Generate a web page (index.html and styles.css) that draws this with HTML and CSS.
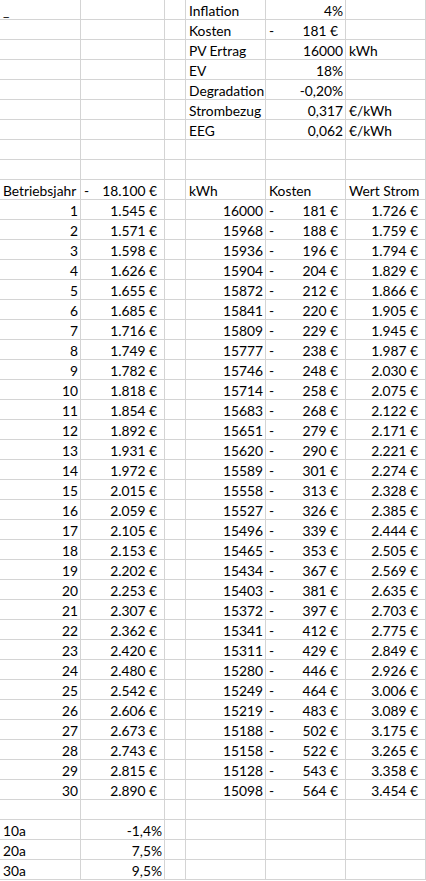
FILE: index.html
```html
<!DOCTYPE html>
<html lang="de">
<head>
<meta charset="utf-8">
<title>PV Berechnung</title>
<link rel="stylesheet" href="styles.css">
</head>
<body>
<div class="sheet">
<div class="c">_</div><div class="c"></div><div class="c"></div><div class="c">Inflation</div><div class="c r">4%</div><div class="c"></div>
<div class="c"></div><div class="c"></div><div class="c"></div><div class="c">Kosten</div><div class="c acc"><span>-</span><span>181 €</span></div><div class="c"></div>
<div class="c"></div><div class="c"></div><div class="c"></div><div class="c">PV Ertrag</div><div class="c r">16000</div><div class="c">kWh</div>
<div class="c"></div><div class="c"></div><div class="c"></div><div class="c">EV</div><div class="c r">18%</div><div class="c"></div>
<div class="c"></div><div class="c"></div><div class="c"></div><div class="c">Degradation</div><div class="c r">-0,20%</div><div class="c"></div>
<div class="c"></div><div class="c"></div><div class="c"></div><div class="c">Strombezug</div><div class="c r">0,317</div><div class="c">€/kWh</div>
<div class="c"></div><div class="c"></div><div class="c"></div><div class="c">EEG</div><div class="c r">0,062</div><div class="c">€/kWh</div>
<div class="c"></div><div class="c"></div><div class="c"></div><div class="c"></div><div class="c"></div><div class="c"></div>
<div class="c"></div><div class="c"></div><div class="c"></div><div class="c"></div><div class="c"></div><div class="c"></div>
<div class="c">Betriebsjahr</div><div class="c acc"><span>-</span><span>18.100 €</span></div><div class="c"></div><div class="c">kWh</div><div class="c">Kosten</div><div class="c">Wert Strom</div>
<div class="c r">1</div><div class="c acc"><span>1.545 €</span></div><div class="c"></div><div class="c r">16000</div><div class="c acc"><span>-</span><span>181 €</span></div><div class="c acc"><span>1.726 €</span></div>
<div class="c r">2</div><div class="c acc"><span>1.571 €</span></div><div class="c"></div><div class="c r">15968</div><div class="c acc"><span>-</span><span>188 €</span></div><div class="c acc"><span>1.759 €</span></div>
<div class="c r">3</div><div class="c acc"><span>1.598 €</span></div><div class="c"></div><div class="c r">15936</div><div class="c acc"><span>-</span><span>196 €</span></div><div class="c acc"><span>1.794 €</span></div>
<div class="c r">4</div><div class="c acc"><span>1.626 €</span></div><div class="c"></div><div class="c r">15904</div><div class="c acc"><span>-</span><span>204 €</span></div><div class="c acc"><span>1.829 €</span></div>
<div class="c r">5</div><div class="c acc"><span>1.655 €</span></div><div class="c"></div><div class="c r">15872</div><div class="c acc"><span>-</span><span>212 €</span></div><div class="c acc"><span>1.866 €</span></div>
<div class="c r">6</div><div class="c acc"><span>1.685 €</span></div><div class="c"></div><div class="c r">15841</div><div class="c acc"><span>-</span><span>220 €</span></div><div class="c acc"><span>1.905 €</span></div>
<div class="c r">7</div><div class="c acc"><span>1.716 €</span></div><div class="c"></div><div class="c r">15809</div><div class="c acc"><span>-</span><span>229 €</span></div><div class="c acc"><span>1.945 €</span></div>
<div class="c r">8</div><div class="c acc"><span>1.749 €</span></div><div class="c"></div><div class="c r">15777</div><div class="c acc"><span>-</span><span>238 €</span></div><div class="c acc"><span>1.987 €</span></div>
<div class="c r">9</div><div class="c acc"><span>1.782 €</span></div><div class="c"></div><div class="c r">15746</div><div class="c acc"><span>-</span><span>248 €</span></div><div class="c acc"><span>2.030 €</span></div>
<div class="c r">10</div><div class="c acc"><span>1.818 €</span></div><div class="c"></div><div class="c r">15714</div><div class="c acc"><span>-</span><span>258 €</span></div><div class="c acc"><span>2.075 €</span></div>
<div class="c r">11</div><div class="c acc"><span>1.854 €</span></div><div class="c"></div><div class="c r">15683</div><div class="c acc"><span>-</span><span>268 €</span></div><div class="c acc"><span>2.122 €</span></div>
<div class="c r">12</div><div class="c acc"><span>1.892 €</span></div><div class="c"></div><div class="c r">15651</div><div class="c acc"><span>-</span><span>279 €</span></div><div class="c acc"><span>2.171 €</span></div>
<div class="c r">13</div><div class="c acc"><span>1.931 €</span></div><div class="c"></div><div class="c r">15620</div><div class="c acc"><span>-</span><span>290 €</span></div><div class="c acc"><span>2.221 €</span></div>
<div class="c r">14</div><div class="c acc"><span>1.972 €</span></div><div class="c"></div><div class="c r">15589</div><div class="c acc"><span>-</span><span>301 €</span></div><div class="c acc"><span>2.274 €</span></div>
<div class="c r">15</div><div class="c acc"><span>2.015 €</span></div><div class="c"></div><div class="c r">15558</div><div class="c acc"><span>-</span><span>313 €</span></div><div class="c acc"><span>2.328 €</span></div>
<div class="c r">16</div><div class="c acc"><span>2.059 €</span></div><div class="c"></div><div class="c r">15527</div><div class="c acc"><span>-</span><span>326 €</span></div><div class="c acc"><span>2.385 €</span></div>
<div class="c r">17</div><div class="c acc"><span>2.105 €</span></div><div class="c"></div><div class="c r">15496</div><div class="c acc"><span>-</span><span>339 €</span></div><div class="c acc"><span>2.444 €</span></div>
<div class="c r">18</div><div class="c acc"><span>2.153 €</span></div><div class="c"></div><div class="c r">15465</div><div class="c acc"><span>-</span><span>353 €</span></div><div class="c acc"><span>2.505 €</span></div>
<div class="c r">19</div><div class="c acc"><span>2.202 €</span></div><div class="c"></div><div class="c r">15434</div><div class="c acc"><span>-</span><span>367 €</span></div><div class="c acc"><span>2.569 €</span></div>
<div class="c r">20</div><div class="c acc"><span>2.253 €</span></div><div class="c"></div><div class="c r">15403</div><div class="c acc"><span>-</span><span>381 €</span></div><div class="c acc"><span>2.635 €</span></div>
<div class="c r">21</div><div class="c acc"><span>2.307 €</span></div><div class="c"></div><div class="c r">15372</div><div class="c acc"><span>-</span><span>397 €</span></div><div class="c acc"><span>2.703 €</span></div>
<div class="c r">22</div><div class="c acc"><span>2.362 €</span></div><div class="c"></div><div class="c r">15341</div><div class="c acc"><span>-</span><span>412 €</span></div><div class="c acc"><span>2.775 €</span></div>
<div class="c r">23</div><div class="c acc"><span>2.420 €</span></div><div class="c"></div><div class="c r">15311</div><div class="c acc"><span>-</span><span>429 €</span></div><div class="c acc"><span>2.849 €</span></div>
<div class="c r">24</div><div class="c acc"><span>2.480 €</span></div><div class="c"></div><div class="c r">15280</div><div class="c acc"><span>-</span><span>446 €</span></div><div class="c acc"><span>2.926 €</span></div>
<div class="c r">25</div><div class="c acc"><span>2.542 €</span></div><div class="c"></div><div class="c r">15249</div><div class="c acc"><span>-</span><span>464 €</span></div><div class="c acc"><span>3.006 €</span></div>
<div class="c r">26</div><div class="c acc"><span>2.606 €</span></div><div class="c"></div><div class="c r">15219</div><div class="c acc"><span>-</span><span>483 €</span></div><div class="c acc"><span>3.089 €</span></div>
<div class="c r">27</div><div class="c acc"><span>2.673 €</span></div><div class="c"></div><div class="c r">15188</div><div class="c acc"><span>-</span><span>502 €</span></div><div class="c acc"><span>3.175 €</span></div>
<div class="c r">28</div><div class="c acc"><span>2.743 €</span></div><div class="c"></div><div class="c r">15158</div><div class="c acc"><span>-</span><span>522 €</span></div><div class="c acc"><span>3.265 €</span></div>
<div class="c r">29</div><div class="c acc"><span>2.815 €</span></div><div class="c"></div><div class="c r">15128</div><div class="c acc"><span>-</span><span>543 €</span></div><div class="c acc"><span>3.358 €</span></div>
<div class="c r">30</div><div class="c acc"><span>2.890 €</span></div><div class="c"></div><div class="c r">15098</div><div class="c acc"><span>-</span><span>564 €</span></div><div class="c acc"><span>3.454 €</span></div>
<div class="c"></div><div class="c"></div><div class="c"></div><div class="c"></div><div class="c"></div><div class="c"></div>
<div class="c">10a</div><div class="c r">-1,4%</div><div class="c"></div><div class="c"></div><div class="c"></div><div class="c"></div>
<div class="c">20a</div><div class="c r">7,5%</div><div class="c"></div><div class="c"></div><div class="c"></div><div class="c"></div>
<div class="c">30a</div><div class="c r">9,5%</div><div class="c"></div><div class="c"></div><div class="c"></div><div class="c"></div>
</div>
</body>
</html>
```

FILE: styles.css
```css
html, body {
  margin: 0;
  padding: 0;
  background: #ffffff;
}

.sheet {
  display: grid;
  grid-template-columns: 81px 84px 21px 80px 80px 80px;
  grid-auto-rows: 20px;
  width: 426px;
  font-family: Lato, "Liberation Sans", sans-serif;
  font-size: 13.8px;
  color: #000000;
}

.c {
  box-sizing: border-box;
  border-right: 1px solid #d4d4d4;
  border-bottom: 1px solid #d4d4d4;
  padding: 0 2px 0 3px;
  display: flex;
  align-items: flex-end;
  justify-content: flex-start;
  line-height: 17px;
  white-space: nowrap;
  overflow: hidden;
}

.r {
  justify-content: flex-end;
}

.acc {
  justify-content: space-between;
  padding-right: 7px;
}

.acc > span:only-child {
  margin-left: auto;
}
```
